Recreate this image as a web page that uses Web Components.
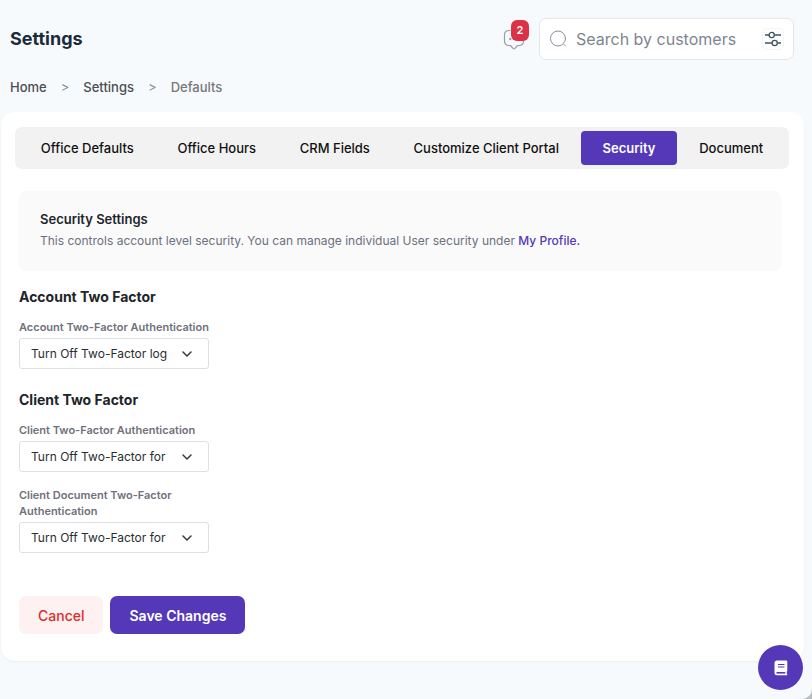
<!DOCTYPE html>
<html lang="en">
<head>
<meta charset="utf-8">
<meta name="viewport" content="width=device-width, initial-scale=1">
<title>Settings</title>
<style>
  html {
    background-color: #b9bcbf;
  }

  body {
    margin: 0;
    font-family: Inter, "Liberation Sans", sans-serif;
    font-size: 13px;
    color: #212529;
  }
</style>
</head>
<body>
<settings-page>
  <page-header slot="header" heading="Settings" count="2"></page-header>
  <bread-crumbs slot="header"></bread-crumbs>

  <tab-bar>
    <tab-item>Office Defaults</tab-item>
    <tab-item>Office Hours</tab-item>
    <tab-item>CRM Fields</tab-item>
    <tab-item>Customize Client Portal</tab-item>
    <tab-item active>Security</tab-item>
    <tab-item>Document</tab-item>
  </tab-bar>

  <info-panel></info-panel>

  <settings-section heading="Account Two Factor">
    <select-field label="Account Two-Factor Authentication" value="Turn Off Two-Factor log"></select-field>
  </settings-section>

  <settings-section heading="Client Two Factor">
    <select-field label="Client Two-Factor Authentication" value="Turn Off Two-Factor for"></select-field>
    <select-field label="Client Document Two-Factor Authentication" value="Turn Off Two-Factor for"></select-field>
  </settings-section>

  <form-actions></form-actions>
</settings-page>
<help-button></help-button>

<script>
// Attaches an open shadow root filled with the given markup
function render(element, html) {
  const template = document.createElement('template');
  template.innerHTML = html;
  element.attachShadow({ mode: 'open' }).appendChild(template.content.cloneNode(true));
}

/* Page background with the white card that holds the settings */
class SettingsPage extends HTMLElement {
  connectedCallback() {
    render(this, `
      <style>
        :host {
          display: flex;
          flex-direction: column;
          box-sizing: border-box;
          min-height: 100vh;
          padding-bottom: 38px;
          background-color: #f6fafd;
          border-bottom-right-radius: 10px;
        }

        main {
          display: flex;
          flex-direction: column;
          margin: 0 8px 0 1px;
          padding: 15px 15px 27px 14px;
          background-color: white;
          border-radius: 14px;
          box-shadow: 0 1px 2px rgba(0, 0, 0, 0.05);
        }
      </style>
      <slot name="header"></slot>
      <main><slot></slot></main>
    `);
  }
}

/* Heading, notifications and search */
class PageHeader extends HTMLElement {
  connectedCallback() {
    render(this, `
      <style>
        :host {
          display: flex;
          align-items: center;
          padding: 18px 18px 0 10px;
        }

        h1 {
          flex: 1;
          margin: 0;
          font-size: 18px;
          line-height: 24px;
          font-weight: 700;
          color: #1c2b3b;
        }

        .notifications {
          position: relative;
          width: 24px;
          height: 24px;
          margin-right: 13px;
          padding: 0;
          border: 0;
          background: none;
          font: inherit;
        }

        .notifications svg {
          display: block;
        }

        .badge {
          position: absolute;
          top: -7px;
          right: -3px;
          width: 18px;
          border-radius: 6px;
          background-color: #dc3248;
          color: white;
          font-size: 11px;
          line-height: 21px;
          font-weight: 600;
        }

        .search {
          display: flex;
          align-items: center;
          box-sizing: border-box;
          width: 255px;
          height: 42px;
          padding: 0 9px;
          background-color: white;
          border: 1px solid #e4e6ea;
          border-radius: 7px;
        }

        input {
          flex: 1;
          min-width: 0;
          margin: 0 0 0 7px;
          padding: 0;
          border: 0;
          outline: 0;
          background: none;
          font: inherit;
          font-size: 16px;
          color: #212529;
        }

        input::placeholder {
          color: #7e8590;
          opacity: 1;
        }

        .filter {
          display: grid;
          place-items: center;
          width: 22px;
          height: 22px;
          padding: 0;
          border: 1px solid #f3f4f5;
          border-radius: 5px;
          background: none;
        }
      </style>
      <h1></h1>
      <button class="notifications" type="button" aria-label="Notifications">
        <svg width="24" height="24" viewBox="0 0 24 24" fill="none" stroke="#9a9da2" stroke-width="1.200" stroke-linecap="round" stroke-linejoin="round">
          <path d="M8 3.500H7Q2.500 3.500 2.500 8V14Q2.500 18.500 7 18.500H8.500L11 21.400Q12 22.400 13 21.400L15.500 18.500H17Q21.500 18.500 21.500 14V12" />
          <circle cx="8.300" cy="12" r=".6" fill="#9a9da2" />
        </svg>
        <span class="badge"></span>
      </button>
      <div class="search">
        <svg width="20" height="20" viewBox="0 0 20 20" fill="none" stroke="#8b8f9c" stroke-linecap="round">
          <circle cx="9" cy="9.500" r="7.500" />
          <path d="M15 15.500L16.500 17" />
        </svg>
        <input type="text" placeholder="Search by customers" aria-label="Search by customers">
        <button class="filter" type="button" aria-label="Filters">
          <svg width="18" height="18" viewBox="0 0 18 18" fill="none" stroke="#3d5463" stroke-width="1.300">
            <path d="M1 5H5M10.500 5H17M1 13H8M13.500 13H17" />
            <circle cx="7.700" cy="5" r="2.600" />
            <circle cx="10.700" cy="13" r="2.600" />
          </svg>
        </button>
      </div>
    `);
    this.shadowRoot.querySelector('h1').textContent = this.getAttribute('heading');
    this.shadowRoot.querySelector('.badge').textContent = this.getAttribute('count');
  }
}

class BreadCrumbs extends HTMLElement {
  connectedCallback() {
    render(this, `
      <style>
        :host {
          display: block;
          padding: 17px 10px 15px;
          line-height: 20px;
        }

        nav {
          display: flex;
          gap: 14px;
          font-weight: 500;
          color: #75787d;
        }

        a {
          color: #4b4e54;
          text-decoration: none;
        }

        .separator {
          color: #85888d;
          font-weight: 400;
        }
      </style>
      <nav aria-label="Breadcrumb">
        <a href="#">Home</a>
        <span class="separator">&gt;</span>
        <a href="#">Settings</a>
        <span class="separator">&gt;</span>
        <span>Defaults</span>
      </nav>
    `);
  }
}

class TabBar extends HTMLElement {
  connectedCallback() {
    render(this, `
      <style>
        :host {
          display: block;
        }

        nav {
          display: flex;
          padding: 4px;
          background-color: #f2f2f2;
          border-radius: 7px;
        }
      </style>
      <nav aria-label="Settings"><slot></slot></nav>
    `);
  }
}

class TabItem extends HTMLElement {
  connectedCallback() {
    render(this, `
      <style>
        :host {
          display: block;
          flex: 1 1 auto;
        }

        a {
          display: block;
          padding: 0 12px;
          border-radius: 4px;
          line-height: 34px;
          font-weight: 500;
          text-align: center;
          text-decoration: none;
          white-space: nowrap;
          color: #111;
        }

        /* Current tab */
        :host([active]) a {
          background-color: #5538b8;
          color: white;
          font-weight: 600;
        }
      </style>
      <a href="#"><slot></slot></a>
    `);
  }
}

class InfoPanel extends HTMLElement {
  connectedCallback() {
    render(this, `
      <style>
        :host {
          display: block;
          margin: 22px 8px 16px 4px;
          padding: 18px 21px 20px;
          background-color: #fafafa;
          border-radius: 7px;
          line-height: 21px;
        }

        h2, p {
          margin: 0;
          font-size: 13px;
        }

        h2 {
          font-weight: 600;
        }

        p {
          font-size: 12px;
          color: #6b7080;
        }

        a {
          color: #5538b8;
          font-weight: 500;
          text-decoration: none;
        }
      </style>
      <h2>Security Settings</h2>
      <p>This controls account level security. You can manage individual User security under <a href="#">My Profile.</a></p>
    `);
  }
}

class SettingsSection extends HTMLElement {
  connectedCallback() {
    render(this, `
      <style>
        :host {
          display: flex;
          flex-direction: column;
          gap: 15px;
          margin: 0 4px 21px;
        }

        h2 {
          margin: 0 0 -3px;
          font-size: 14px;
          line-height: 20px;
          font-weight: 700;
        }
      </style>
      <h2></h2>
      <slot></slot>
    `);
    this.shadowRoot.querySelector('h2').textContent = this.getAttribute('heading');
  }
}

class SelectField extends HTMLElement {
  connectedCallback() {
    render(this, `
      <style>
        :host {
          display: flex;
          flex-direction: column;
          gap: 3px;
          width: 190px;
        }

        label {
          font-size: 11px;
          line-height: 16px;
          font-weight: 600;
          color: #70717b;
        }

        .control {
          display: grid;
          align-items: center;
        }

        select, svg {
          grid-area: 1 / 1;
        }

        select {
          appearance: none;
          width: 100%;
          height: 31px;
          margin: 0;
          padding: 0 40px 0 11px;
          border: 1px solid #dfe0e3;
          border-radius: 3px;
          background-color: white;
          font: inherit;
          font-size: 12px;
          color: #292d32;
        }

        svg {
          justify-self: end;
          margin-right: 16px;
          pointer-events: none;
        }
      </style>
      <label for="field"></label>
      <div class="control">
        <select id="field"><option></option></select>
        <svg width="12" height="12" viewBox="0 0 12 12" fill="none" stroke="#343a40" stroke-width="1.500" stroke-linecap="round" stroke-linejoin="round">
          <path d="M2 4L6 8L10 4" />
        </svg>
      </div>
    `);
    this.shadowRoot.querySelector('label').textContent = this.getAttribute('label');
    this.shadowRoot.querySelector('option').textContent = this.getAttribute('value');
  }
}

class FormActions extends HTMLElement {
  connectedCallback() {
    render(this, `
      <style>
        :host {
          display: flex;
          gap: 7px;
          margin: 22px 4px 0;
        }

        button {
          height: 38px;
          padding: 0 19px;
          border: 0;
          border-radius: 7px;
          font: inherit;
          font-size: 14px;
          font-weight: 500;
        }

        .cancel {
          background-color: #fef1f1;
          color: #dc2c2c;
        }

        .save {
          background-color: #5538b8;
          color: white;
          font-weight: 600;
        }
      </style>
      <button class="cancel" type="button">Cancel</button>
      <button class="save" type="button">Save Changes</button>
    `);
  }
}

/* Round button that stays over the page's bottom corner */
class HelpButton extends HTMLElement {
  connectedCallback() {
    render(this, `
      <style>
        :host {
          display: block;
          position: fixed;
          right: 9px;
          bottom: 9px;
        }

        button {
          display: grid;
          place-items: center;
          width: 45px;
          height: 45px;
          padding: 0;
          border: 0;
          border-radius: 50%;
          background-color: #5538b8;
        }
      </style>
      <button type="button" aria-label="Help">
        <svg width="14" height="16" viewBox="0 0 14 16">
          <path fill="white" d="M3 .5H12.200Q13.300 .5 13.300 1.600V10.800Q13.300 11.400 12.800 11.700V14Q13.300 14.300 13.300 14.700Q13.300 15.300 12.600 15.300H3Q.5 15.300 .5 12.800V3Q.5 .5 3 .5Z" />
          <path fill="none" stroke="#5538b8" d="M4 4.500H10.500M4 7H10.500" />
          <path fill="none" stroke="#5538b8" stroke-width="1.600" d="M2.500 12.800H11.300" />
        </svg>
      </button>
    `);
  }
}

customElements.define('settings-page', SettingsPage);
customElements.define('page-header', PageHeader);
customElements.define('bread-crumbs', BreadCrumbs);
customElements.define('tab-bar', TabBar);
customElements.define('tab-item', TabItem);
customElements.define('info-panel', InfoPanel);
customElements.define('settings-section', SettingsSection);
customElements.define('select-field', SelectField);
customElements.define('form-actions', FormActions);
customElements.define('help-button', HelpButton);
</script>
</body>
</html>
